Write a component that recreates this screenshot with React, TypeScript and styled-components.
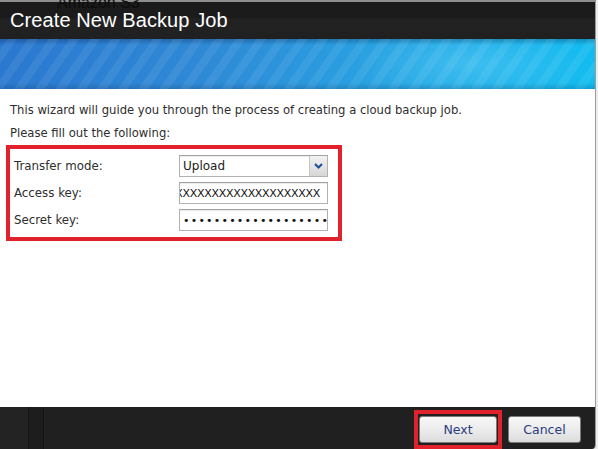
import React from "react";
import styled, { createGlobalStyle } from "styled-components";

const Global = createGlobalStyle`
  html, body { margin: 0; padding: 0; background: #ececec; }
  body { width: 598px; height: 449px; overflow: hidden; font-family: "DejaVu Sans", Tahoma, sans-serif; }
  #root { width: 598px; height: 449px; }
`;

const Page = styled.div`
  position: relative;
  width: 598px;
  height: 449px;
  background: #ececec;
  overflow: hidden;
`;

const BehindText = styled.div`
  position: absolute;
  left: 57px;
  top: -6px;
  font-family: "Liberation Sans", Arial, sans-serif;
  font-size: 16px;
  color: #0c0c0c;
  z-index: 2;
  pointer-events: none;
`;

const Dialog = styled.div`
  width: 595px;
  height: 447px;
  margin-top: 2px;
  border-right: 1px solid #9c9c9c;
  display: flex;
  flex-direction: column;
  background: #fff;
  border-bottom-right-radius: 4px;
  overflow: hidden;
`;

const TopStrip = styled.div`
  position: absolute;
  left: 0;
  top: 0;
  width: 596px;
  height: 2px;
  background: #8e8e8e;
`;

const TitleBar = styled.div`
  height: 37px;
  flex: none;
  background: linear-gradient(#1a1a1b 0%, #1b1b1c 42%, #222223 46%, #202021 100%);
  display: flex;
  align-items: center;
  padding-left: 10px;
`;

const Title = styled.h1`
  margin: 0;
  font-family: "Liberation Sans", Arial, sans-serif;
  font-weight: normal;
  font-size: 20px;
  color: #ffffff;
  letter-spacing: 0.1px;
`;

const Banner = styled.div`
  height: 50px;
  flex: none;
  background:
    repeating-linear-gradient(
      -55deg,
      rgba(255, 255, 255, 0) 0px,
      rgba(255, 255, 255, 0) 9px,
      rgba(255, 255, 255, 0.07) 9px,
      rgba(255, 255, 255, 0.07) 17px
    ),
    linear-gradient(rgba(0, 0, 40, 0.25) 0px, rgba(0, 0, 40, 0) 6px, rgba(0, 0, 0, 0) 44px, rgba(0, 30, 60, 0.18) 50px),
    radial-gradient(ellipse 120px 40px at 470px 25px, rgba(120, 220, 255, 0.35), rgba(120, 220, 255, 0)),
    linear-gradient(100deg, #2a78cf 0%, #2f8ad6 35%, #27a3e2 65%, #12bdf0 100%);
`;

const Body = styled.div`
  flex: 1;
  padding: 10px 0 0 0;
  display: flex;
  flex-direction: column;
  color: #2e2e2e;
  font-size: 11.6px;
`;

const Para = styled.p`
  margin: 0 0 0 10px;
  line-height: 23px;
`;

const RedBox = styled.div`
  border: 4px solid #e1212b;
  box-sizing: border-box;
`;

const FieldBox = styled(RedBox)`
  margin: 0 0 0 6px;
  width: 336px;
  height: 96px;
  padding: 6px 10px 0 4px;
  display: flex;
  flex-direction: column;
  gap: 5px;
`;

const Row = styled.div`
  display: flex;
  align-items: center;
  height: 22px;
`;

const Label = styled.label`
  width: 165px;
  flex: none;
  color: #2e2e2e;
  font-size: 11.8px;
`;

const Field = styled.div`
  width: 149px;
  height: 22px;
  box-sizing: border-box;
  border: 1px solid #b2b2b2;
  border-top-color: #a2a2a2;
  background: #fff;
  display: flex;
  align-items: center;
  overflow: hidden;
  position: relative;
  box-shadow: inset 0 1px 1px rgba(0, 0, 0, 0.08);
`;

const SelectText = styled.span`
  padding-left: 3px;
  font-size: 12px;
  color: #222;
  flex: 1;
`;

const ArrowBox = styled.span`
  width: 17px;
  height: 20px;
  border-left: 1px solid #c4c4c4;
  background: linear-gradient(#f2f2f2, #d6d6d6);
  display: flex;
  align-items: center;
  justify-content: center;
`;

const ScrollText = styled.span`
  position: absolute;
  right: 7px;
  white-space: nowrap;
  font-size: 11px;
  color: #111;
  letter-spacing: -0.3px;
`;

const Dots = styled.span`
  position: absolute;
  left: 3px;
  white-space: nowrap;
  font-size: 11px;
  color: #111;
  letter-spacing: 1.2px;
`;

const Footer = styled.div`
  height: 42px;
  flex: none;
  background:
    linear-gradient(90deg, #232323 0px, #232323 28px, #151515 28px, #151515 29px, #1d1d1d 29px, #1d1d1d 43px, #141414 43px, #141414 44px, #202020 44px);
  display: flex;
  align-items: center;
  justify-content: flex-end;
  padding-right: 14px;
  gap: 6px;
`;

const ButtonFrame = styled(RedBox)`
  padding: 2px 1px;
  margin-top: 2px;
`;

const Button = styled.button`
  width: 78px;
  height: 27px;
  box-sizing: border-box;
  border: 1px solid #7a7a7a;
  border-radius: 3px;
  background: linear-gradient(#f7f7f7 0%, #ececec 50%, #dcdcdc 100%);
  color: #2a3c80;
  font-family: "DejaVu Sans", Tahoma, sans-serif;
  font-size: 12.5px;
  padding: 0;
  cursor: pointer;
`;

const CancelButton = styled(Button)`
  width: 73px;
  margin-top: 2px;
`;

export default function App() {
  return (
    <>
      <Global />
      <Page>
        <TopStrip />
        <BehindText>Amazon S3</BehindText>
        <Dialog>
          <TitleBar>
            <Title>Create New Backup Job</Title>
          </TitleBar>
          <Banner />
          <Body>
            <Para>This wizard will guide you through the process of creating a cloud backup job.</Para>
            <Para>Please fill out the following:</Para>
            <FieldBox>
              <Row>
                <Label>Transfer mode:</Label>
                <Field>
                  <SelectText>Upload</SelectText>
                  <ArrowBox>
                    <svg width="9" height="6" viewBox="0 0 9 6">
                      <path d="M1 1 L4.5 4.5 L8 1" fill="none" stroke="#1c4e9c" strokeWidth="2" />
                    </svg>
                  </ArrowBox>
                </Field>
              </Row>
              <Row>
                <Label>Access key:</Label>
                <Field>
                  <ScrollText>XXXXXXXXXXXXXXXXXXXXX</ScrollText>
                </Field>
              </Row>
              <Row>
                <Label>Secret key:</Label>
                <Field>
                  <Dots>•••••••••••••••••••••</Dots>
                </Field>
              </Row>
            </FieldBox>
          </Body>
          <Footer>
            <ButtonFrame>
              <Button>Next</Button>
            </ButtonFrame>
            <CancelButton>Cancel</CancelButton>
          </Footer>
        </Dialog>
      </Page>
    </>
  );
}
